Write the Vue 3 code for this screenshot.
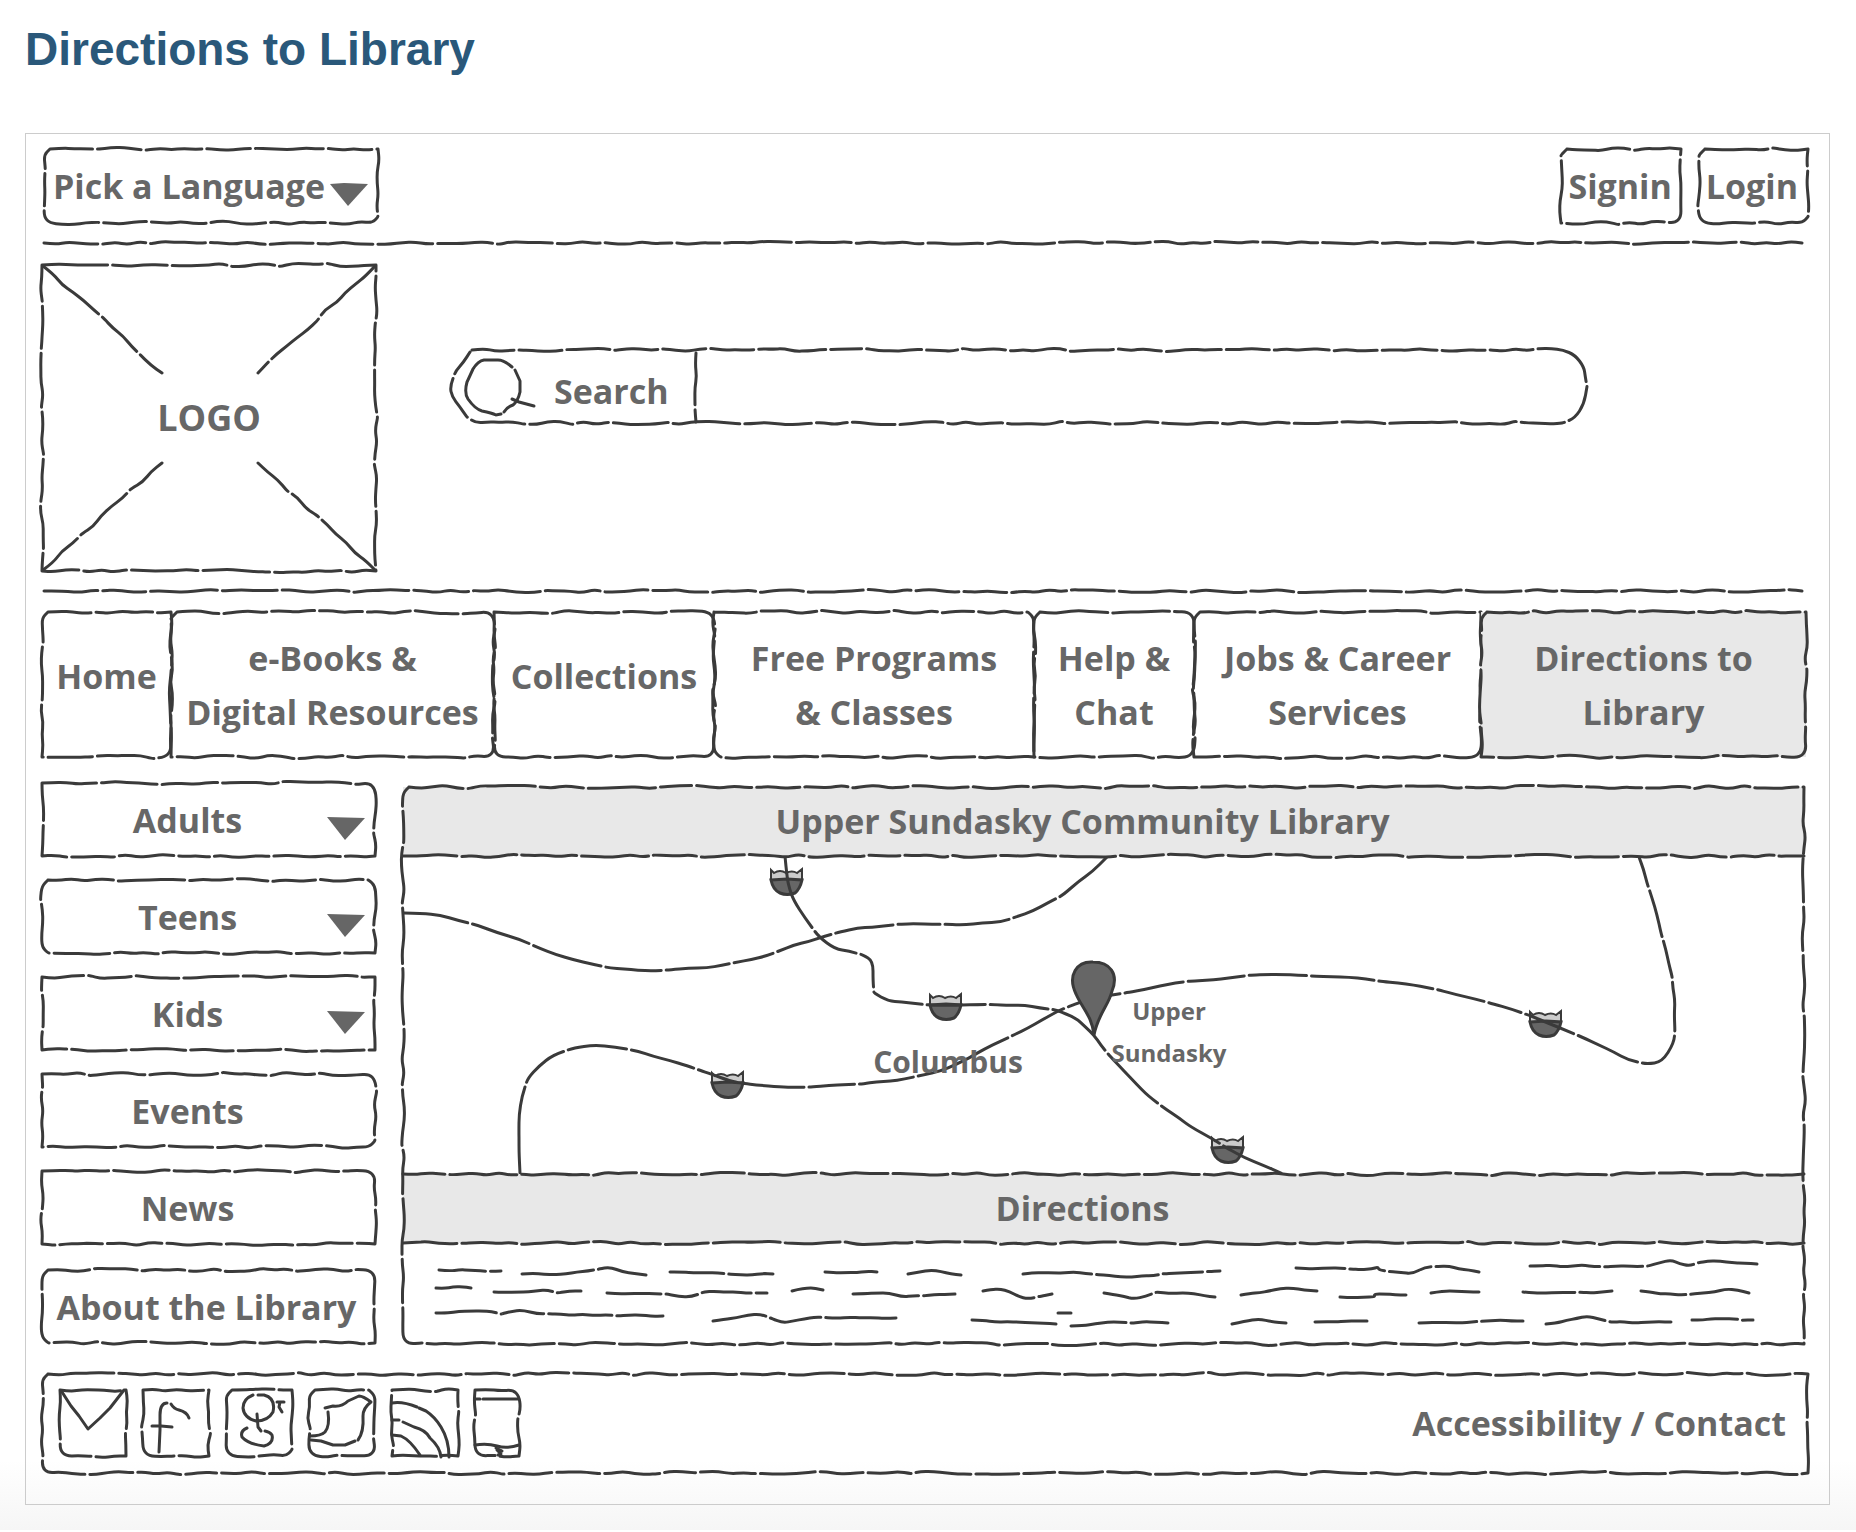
<script setup>
import { defineComponent, h, onBeforeUnmount, onMounted, reactive, ref } from 'vue'

/* Small seeded generator, so each stroke keeps its shape between renders. */
function randomFrom(seed) {
  let s = (seed * 2654435761) >>> 0
  return () => {
    s = (s + 0x6d2b79f5) >>> 0
    let t = Math.imul(s ^ (s >>> 15), 1 | s)
    t = (t + Math.imul(t ^ (t >>> 7), 61 | t)) ^ t
    return ((t ^ (t >>> 14)) >>> 0) / 4294967296
  }
}

/* Turns a list of points into a wavering pen line with short breaks in it. */
function ink(points, seed = 1, jitter = 1.7, step = 12) {
  const rand = randomFrom(seed)
  const dense = [points[0]]
  for (let i = 1; i < points.length; i++) {
    const [ax, ay] = points[i - 1]
    const [bx, by] = points[i]
    const len = Math.hypot(bx - ax, by - ay)
    const n = Math.max(1, Math.round(len / step))
    for (let k = 1; k <= n; k++) {
      const off = len && k < n ? (rand() * 2 - 1) * jitter : 0
      const t = k / n
      const nx = len ? -(by - ay) / len : 0
      const ny = len ? (bx - ax) / len : 0
      dense.push([ax + (bx - ax) * t + nx * off, ay + (by - ay) * t + ny * off])
    }
  }
  const f = (v) => v.toFixed(1)
  let d = `M${f(dense[0][0])} ${f(dense[0][1])}`
  let run = 0
  let limit = 30 + rand() * 35
  for (let i = 1; i < dense.length - 1; i++) {
    const [px, py] = dense[i]
    const [qx, qy] = dense[i + 1]
    const mx = (px + qx) / 2
    const my = (py + qy) / 2
    d += `Q${f(px)} ${f(py)} ${f(mx)} ${f(my)}`
    const seg = Math.hypot(qx - px, qy - py)
    run += seg
    if (run > limit && seg > 9 && i < dense.length - 2) {
      d += `M${f(mx + ((qx - px) / seg) * 5)} ${f(my + ((qy - py) / seg) * 5)}`
      run = 0
      limit = 34 + rand() * 30
    }
  }
  const last = dense[dense.length - 1]
  return d + `L${f(last[0])} ${f(last[1])}`
}

function outline(shape, w, height, seed) {
  const rand = randomFrom(seed + 90)
  if (shape === 'line') return ink([[0, height / 2], [w, height / 2]], seed)
  if (shape === 'base') return ink([[0, height], [w, height]], seed)
  if (shape === 'side') return ink([[w, 3], [w, height - 1]], seed)
  if (shape === 'pill') {
    return ink([
      [22, 0], [w - 24, 0], [w - 12, 5], [w - 3, 17], [w, height / 2], [w - 3, height - 19],
      [w - 12, height - 5], [w - 24, height], [26, height], [17, height - 6], [2, height / 2 + 10],
      [0, height / 2], [6, height / 2 - 16], [20, 2]
    ], seed)
  }
  const r = [0, 1, 2, 3].map(() => (shape === 'box' && rand() > 0.5 ? 6 : 0))
  return ink([
    [r[0], 0], [w - r[1], 0], [w, r[1]], [w, height - r[2]], [w - r[2], height],
    [r[3], height], [0, height - r[3]], [0, r[0]], [r[0], 0]
  ], seed)
}

const Sketch = defineComponent({
  props: { shape: { type: String, default: 'box' }, seed: { type: Number, default: 1 } },
  setup(props) {
    const el = ref(null)
    const size = reactive({ w: 0, h: 0 })
    let observer
    const measure = () => {
      size.w = el.value.parentElement.offsetWidth
      size.h = el.value.parentElement.offsetHeight
    }
    onMounted(() => {
      measure()
      observer = new ResizeObserver(measure)
      observer.observe(el.value.parentElement)
    })
    onBeforeUnmount(() => observer.disconnect())
    return () =>
      h('svg', { ref: el, class: 'sketch', 'aria-hidden': 'true' }, [
        h('path', { d: size.w ? outline(props.shape, size.w, size.h, props.seed) : '' })
      ])
  }
})

const nav = [
  { lines: ['Home'] },
  { lines: ['e-Books &', 'Digital Resources'] },
  { lines: ['Collections'] },
  { lines: ['Free Programs', '& Classes'] },
  { lines: ['Help &', 'Chat'] },
  { lines: ['Jobs & Career', 'Services'] },
  { lines: ['Directions to', 'Library'], current: true }
]

const audiences = ['Adults', 'Teens', 'Kids']
const pages = ['Events', 'News', 'About the Library']

const roads = [
  [[1, 57], [37, 59], [74, 69], [95, 77], [116, 83], [136, 92], [171, 104], [207, 112], [249, 115], [304, 112], [363, 100], [391, 89], [419, 81], [455, 72], [497, 68], [561, 69], [598, 66], [630, 55], [660, 39], [676, 25], [689, 16], [704, 1]],
  [[382, 0], [384, 22], [391, 45], [402, 62], [416, 81], [432, 93], [460, 99], [470, 105], [470, 125], [471, 137], [485, 145], [526, 149], [559, 149], [621, 149], [653, 154], [673, 162], [691, 179], [706, 199], [721, 215], [745, 240], [764, 254], [788, 271], [808, 282], [842, 302], [878, 317]],
  [[117, 317], [116, 289], [116, 259], [119, 240], [125, 222], [136, 210], [150, 199], [171, 192], [191, 189], [212, 191], [235, 195], [265, 204], [285, 210], [308, 218], [327, 225], [354, 229], [377, 231], [409, 231], [460, 228], [501, 223], [538, 215], [566, 202], [598, 185], [625, 172], [655, 155], [678, 146], [709, 139], [757, 130], [788, 125], [818, 123], [849, 119], [895, 119], [963, 123], [1011, 129], [1036, 134], [1072, 143], [1108, 153], [1128, 160], [1162, 174], [1196, 189], [1225, 204], [1244, 208], [1259, 206], [1271, 187], [1272, 145], [1269, 120], [1263, 94], [1254, 59], [1244, 27], [1236, 1]]
].map((pts, i) => ink(pts, i + 40, 0.8, 16))

const shields = [[367, 13], [526, 138], [308, 216], [1126, 155], [808, 281]]

const scribbles = [
  [[36, 27], [98, 28]],
  [[119, 31], [163, 31], [185, 28], [207, 24], [220, 29], [243, 32]],
  [[267, 29], [292, 30], [338, 32], [370, 31]],
  [[422, 29], [474, 29]],
  [[505, 31], [528, 27], [558, 32]],
  [[620, 31], [671, 29], [718, 34], [782, 30], [817, 28]],
  [[893, 25], [969, 26], [975, 24], [976, 27], [1009, 31], [1022, 24], [1046, 23], [1076, 29]],
  [[1127, 23], [1245, 23], [1268, 17], [1286, 23], [1305, 18], [1354, 21]],
  [[33, 45], [50, 44], [68, 45]],
  [[91, 49], [126, 49], [144, 47], [155, 50], [178, 48]],
  [[204, 50], [264, 51], [288, 54], [301, 49], [364, 50]],
  [[389, 48], [405, 44], [420, 47]],
  [[450, 51], [486, 50], [500, 54], [552, 51]],
  [[580, 48], [597, 46], [625, 56], [649, 51]],
  [[701, 50], [731, 56], [754, 49], [780, 50], [812, 54]],
  [[838, 52], [866, 48], [889, 45], [914, 48]],
  [[937, 54], [972, 54], [971, 51], [1003, 52]],
  [[1028, 50], [1053, 48], [1076, 49]],
  [[1120, 49], [1189, 50], [1209, 48]],
  [[1238, 48], [1277, 52], [1300, 50], [1323, 46], [1346, 50]],
  [[33, 70], [79, 68], [98, 71], [119, 67], [135, 71], [260, 73]],
  [[310, 78], [357, 71], [380, 80], [412, 74], [493, 75]],
  [[569, 77], [616, 79], [653, 81]],
  [[655, 70], [668, 70]],
  [[668, 83], [717, 79], [765, 80]],
  [[829, 81], [856, 76], [883, 80]],
  [[912, 79], [964, 78]],
  [[1016, 80], [1069, 79], [1097, 77], [1120, 78]],
  [[1143, 81], [1184, 73], [1208, 79], [1268, 79]],
  [[1289, 77], [1319, 76], [1350, 77]]
].map((pts, i) => ink(pts, i + 60, 1, 11))

const diagonals = [
  [[1, 1], [120, 108]],
  [[333, 1], [216, 108]],
  [[1, 305], [120, 198]],
  [[333, 305], [216, 198]]
].map((pts, i) => ink(pts, i + 5, 1.7, 13))

const social = [
  { name: 'Email', art: ['M2 2 L11 16 L19 26 L28 39 L40 28 L50 18 L64 0'] },
  { name: 'Facebook', art: ['M16 62 L17 40 L17 25 Q17 13 24 13', 'M28 14 Q31 19 36 20 Q44 22 46 28', 'M9 36 L18 36 L29 37'] },
  { name: 'Google Plus', art: ['M27 5 Q17 9 17 18 Q18 28 30 31 Q42 31 47 22 Q50 8 38 5 L32 5', 'M31 24 L32 37 L35 41', 'M21 38 Q14 41 16 47 Q22 54 38 56 Q48 53 46 45 Q44 42 39 41', 'M51 12 H58 M54 12 L53 17 L56 22'] },
  { name: 'Twitter', art: ['M16 18 L24 16 Q33 17 39 11 L50 6 Q54 6 62 12 Q54 18 54 26 Q55 42 49 50', 'M46 51 L36 55 L24 55 L12 51 L2 50', 'M1 46 Q12 46 16 42 Q21 36 19 22'] },
  { name: 'RSS', art: ['M0 13 Q10 11 25 17', 'M27 18 L34 21 Q43 27 49 37 Q57 50 57 67', 'M0 30 H7 M11 32 L22 37 Q34 40 38 48 Q48 57 49 67', 'M0 45 L9 46 Q18 50 28 65'] },
  { name: 'Mobile', narrow: true, art: ['M0 9 H5 M8 9 H43', 'M0 55 Q12 53 22 56 T44 55', 'M21 58 L27 61 L22 60 L26 64 L23 65'] }
]
</script>

<template>
  <div class="page">
    <h1 class="title">Directions to Library</h1>

    <div class="frame">
      <header class="topbar">
        <div class="language sketched">
          <select class="picker" aria-label="Pick a Language">
            <option>Pick a Language</option>
          </select>
          <svg class="caret" viewBox="0 0 38 23" aria-hidden="true"><path d="M0 1 L14 0 L38 1 L18 23 Z" /></svg>
          <Sketch :seed="3" />
        </div>
        <div class="account">
          <button class="account-button sketched" type="button">Signin<Sketch :seed="4" /></button>
          <button class="account-button sketched" type="button">Login<Sketch :seed="9" /></button>
        </div>
      </header>

      <div class="rule" role="separator"><Sketch shape="line" :seed="11" /></div>

      <div class="masthead">
        <div class="logo sketched">
          <svg class="logo-cross" viewBox="0 0 334 306" aria-hidden="true">
            <path v-for="(d, i) in diagonals" :key="i" :d="d" />
          </svg>
          <span>LOGO</span>
          <Sketch shape="square" :seed="12" />
        </div>
        <form class="search sketched" role="search" @submit.prevent>
          <label class="search-label sketched" for="query">
            <svg class="lens" viewBox="0 0 88 60" aria-hidden="true">
              <path d="M50 10 Q42 3 36 3 L22 3 Q16 4 11 12 L5 25 Q2 36 6 42 Q13 52 20 54 Q30 56 34 58 L39 57" />
              <path d="M42 55 Q45 50 51 48 Q56 44 58 35 L58 24 L53 13" />
              <path d="M50 42 L57 45 L72 49" />
            </svg>
            Search
            <Sketch shape="side" :seed="14" />
          </label>
          <input id="query" class="search-input" type="text" />
          <Sketch shape="pill" :seed="15" />
        </form>
      </div>

      <div class="rule" role="separator"><Sketch shape="line" :seed="16" /></div>

      <nav class="nav">
        <a
          v-for="(item, i) in nav"
          :key="i"
          href="#"
          class="nav-item sketched"
          :class="{ current: item.current, single: item.lines.length === 1 }"
          :aria-current="item.current ? 'page' : null"
        >
          <span v-for="line in item.lines" :key="line" class="nav-line">{{ line }}</span>
          <Sketch :seed="20 + i" />
        </a>
      </nav>

      <main class="content">
        <aside class="menu">
          <button v-for="(name, i) in audiences" :key="name" type="button" class="menu-item sketched" aria-haspopup="true">
            <span class="menu-name">{{ name }}</span>
            <svg class="caret" viewBox="0 0 38 23" aria-hidden="true"><path d="M0 0 L38 1 L18 23 Z" /></svg>
            <Sketch :seed="30 + i" />
          </button>
          <a v-for="(name, i) in pages" :key="name" href="#" class="menu-item sketched" :class="{ wide: i === 2 }">
            <span class="menu-name">{{ name }}</span>
            <Sketch :seed="34 + i" />
          </a>
        </aside>

        <section class="panel sketched">
          <h2 class="bar sketched">Upper Sundasky Community Library<Sketch shape="base" :seed="50" /></h2>
          <div class="map sketched">
            <svg class="drawing" viewBox="0 0 1401 318" role="img" aria-label="Map of Upper Sundasky">
              <g v-for="([x, y], i) in shields" :key="i" :transform="`translate(${x} ${y})`">
                <path class="shield-top" d="M1 1 L4 4 Q10 0 16 4 Q22 1 27 4 L32 0 L32 12 L1 12 Z" />
                <path class="shield-base" d="M1 11 L17 10 L32 11 Q30 20 25 24 Q17 27 10 24 Q3 21 1 11 Z" />
              </g>
              <path v-for="(d, i) in roads" :key="'r' + i" class="road" :d="d" />
              <path class="pin" d="M691 179 C689 160 679 152 673 138 C664 119 674 105 690 106 C707 106 716 118 709 135 C706 149 695 158 691 179 Z" />
              <text class="place-large" x="545" y="217">Columbus</text>
              <text class="place" x="766" y="164">Upper</text>
              <text class="place" x="766" y="206">Sundasky</text>
            </svg>
            <Sketch shape="base" :seed="51" />
          </div>
          <h2 class="bar sketched">Directions<Sketch shape="base" :seed="52" /></h2>
          <svg class="drawing" viewBox="0 0 1401 101" role="img" aria-label="Written directions">
            <path v-for="(d, i) in scribbles" :key="i" class="scribble" :d="d" />
          </svg>
          <Sketch :seed="53" />
        </section>
      </main>

      <footer class="footer sketched">
        <div class="social">
          <a
            v-for="(item, i) in social"
            :key="item.name"
            href="#"
            class="social-link sketched"
            :class="{ narrow: item.narrow }"
            :aria-label="item.name"
          >
            <svg class="social-art" :viewBox="item.narrow ? '0 0 44 66' : '0 0 66 66'" aria-hidden="true">
              <path v-for="(d, k) in item.art" :key="k" :d="d" />
            </svg>
            <Sketch :seed="70 + i" />
          </a>
        </div>
        <p class="links"><a href="#">Accessibility</a> / <a href="#">Contact</a></p>
        <Sketch :seed="80" />
      </footer>
    </div>
  </div>
</template>

<style>
body {
  background: #fff;
}
</style>

<style scoped>
.page {
  --ink: #3a3a3a;
  --text: #676767;
  --shade: #e8e8e8;
  box-sizing: border-box;
  padding: 23px 26px 25px 25px;
  background: linear-gradient(to top, #f6f6f6, #fff 70px);
  color: var(--text);
  font: 700 34px/54px "Open Sans", "Noto Sans", sans-serif;
}
.page *,
.page *::before {
  box-sizing: border-box;
}
.title {
  margin: 0 0 58px;
  color: #2a587a;
  font: 700 46px/52px "Liberation Sans", Arial, sans-serif;
}
.frame {
  border: 1px solid #ccc;
  padding: 15px 21px 31px 16px;
}
.sketched {
  position: relative;
}
.sketch {
  position: absolute;
  inset: 0;
  width: 100%;
  height: 100%;
  overflow: visible;
  pointer-events: none;
  fill: none;
  stroke: var(--ink);
  stroke-width: 3px;
  stroke-linecap: round;
  stroke-linejoin: round;
}
a {
  color: inherit;
  text-decoration: none;
}
button,
select,
input {
  margin: 0;
  border: 0;
  background: none;
  color: inherit;
  font: inherit;
}
.topbar {
  display: flex;
  justify-content: space-between;
}
.language {
  display: flex;
  align-items: center;
  width: 334px;
  height: 74px;
  margin-left: 2px;
}
.picker {
  width: 100%;
  height: 100%;
  padding: 0 0 0 9px;
  appearance: none;
}
.caret {
  position: absolute;
  right: 10px;
  top: 34px;
  width: 38px;
  height: 23px;
  fill: #666;
  pointer-events: none;
}
.account {
  display: flex;
  gap: 17px;
}
.account-button {
  height: 74px;
  padding: 0 10px 0 7px;
}
.rule {
  position: relative;
  height: 6px;
  margin: 17px 6px 19px 2px;
}
.masthead {
  display: flex;
  gap: 74px;
}
.logo {
  display: flex;
  align-items: center;
  justify-content: center;
  width: 334px;
  height: 306px;
  font-size: 36px;
}
.logo-cross {
  position: absolute;
  inset: 0;
  fill: none;
  stroke: var(--ink);
  stroke-width: 3px;
  stroke-linecap: round;
}
.search {
  display: flex;
  flex: 0 1 1137px;
  height: 73px;
  margin-top: 85px;
}
.search-label {
  display: flex;
  align-items: center;
  gap: 4px;
  width: 246px;
  padding: 8px 0 0 12px;
}
.lens {
  width: 88px;
  height: 60px;
  margin-top: -8px;
  fill: none;
  stroke: var(--ink);
  stroke-width: 3px;
  stroke-linecap: round;
}
.search-input {
  flex: 1;
  min-width: 0;
  padding: 0 36px 0 16px;
  outline: none;
}
.nav {
  display: grid;
  grid-template-columns:
    minmax(0, 129fr) minmax(0, 323fr) minmax(0, 220fr) minmax(0, 320fr)
    minmax(0, 160fr) minmax(0, 287fr) minmax(0, 325fr);
  margin: -1px 2px 0 0;
}
.nav-item {
  display: flex;
  flex-direction: column;
  align-items: center;
  justify-content: center;
  height: 145px;
  white-space: nowrap;
}
.single {
  padding-bottom: 18px;
}
.current {
  background: var(--shade);
}
.content {
  display: grid;
  grid-template-columns: 333px minmax(0, 1fr);
  gap: 28px;
  margin: 26px 4px 0 0;
}
.menu {
  display: flex;
  flex-direction: column;
  gap: 24px;
}
.menu-item {
  display: flex;
  align-items: center;
  width: 100%;
  height: 73px;
  padding: 0 42px 0 0;
}
.menu-name {
  flex: 1;
  text-align: center;
  white-space: nowrap;
}
.wide {
  margin-top: 2px;
  padding: 0 4px 0 0;
}
.panel {
  margin-top: 4px;
}
.bar {
  height: 69px;
  margin: 0;
  padding-right: 42px;
  background: var(--shade);
  font: inherit;
  line-height: 69px;
  text-align: center;
}
.map {
  z-index: 1;
}
.drawing {
  display: block;
  width: 100%;
  height: auto;
}
.road,
.scribble {
  fill: none;
  stroke: var(--ink);
  stroke-width: 3px;
  stroke-linecap: round;
  stroke-linejoin: round;
}
.pin {
  fill: #666;
  stroke: var(--ink);
  stroke-width: 3px;
}
.shield-top {
  fill: #ccc;
  stroke: var(--ink);
  stroke-width: 2px;
}
.shield-base {
  fill: #666;
  stroke: var(--ink);
  stroke-width: 3px;
}
.place,
.place-large {
  fill: var(--text);
  text-anchor: middle;
}
.place-large {
  font-size: 30px;
}
.place {
  font-size: 24px;
}
.footer {
  display: flex;
  align-items: center;
  justify-content: space-between;
  height: 99px;
  margin-top: 30px;
  padding: 0 22px 2px 18px;
}
.social {
  display: flex;
  gap: 17px;
}
.social-link {
  width: 66px;
  height: 66px;
}
.narrow {
  width: 44px;
}
.social-art {
  display: block;
  width: 100%;
  height: 100%;
  overflow: visible;
  fill: none;
  stroke: var(--ink);
  stroke-width: 3px;
  stroke-linecap: round;
  stroke-linejoin: round;
}
.links {
  margin: 0;
}
</style>
